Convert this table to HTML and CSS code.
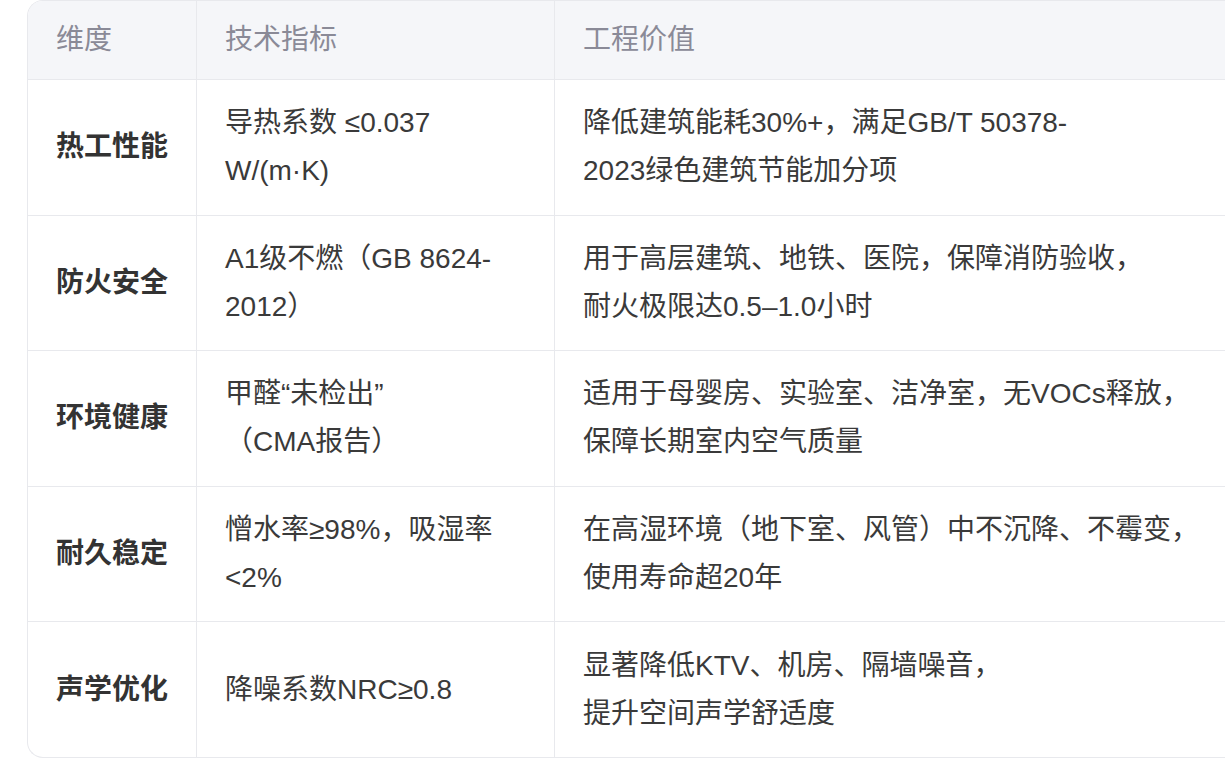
FILE: index.html
```html
<!DOCTYPE html>
<html lang="zh-CN">
<head>
<meta charset="utf-8">
<title>性能指标</title>
<link rel="stylesheet" href="styles.css">
</head>
<body>
<div class="table-wrap">
  <table class="spec-table">
    <colgroup>
      <col class="col-dim">
      <col class="col-metric">
      <col class="col-value">
    </colgroup>
    <thead>
      <tr>
        <th>维度</th>
        <th>技术指标</th>
        <th>工程价值</th>
      </tr>
    </thead>
    <tbody>
      <tr>
        <td class="dim">热工性能</td>
        <td>导热系数 ≤0.037<br>W/(m·K)</td>
        <td>降低建筑能耗30%+，满足GB/T 50378-<br>2023绿色建筑节能加分项</td>
      </tr>
      <tr>
        <td class="dim">防火安全</td>
        <td>A1级不燃（GB 8624-<br>2012）</td>
        <td>用于高层建筑、地铁、医院，保障消防验收，<br>耐火极限达0.5–1.0小时</td>
      </tr>
      <tr>
        <td class="dim">环境健康</td>
        <td>甲醛“未检出”<br>（CMA报告）</td>
        <td>适用于母婴房、实验室、洁净室，无VOCs释放，<br>保障长期室内空气质量</td>
      </tr>
      <tr>
        <td class="dim">耐久稳定</td>
        <td>憎水率≥98%，吸湿率<br>&lt;2%</td>
        <td>在高湿环境（地下室、风管）中不沉降、不霉变，<br>使用寿命超20年</td>
      </tr>
      <tr>
        <td class="dim">声学优化</td>
        <td>降噪系数NRC≥0.8</td>
        <td>显著降低KTV、机房、隔墙噪音，<br>提升空间声学舒适度</td>
      </tr>
    </tbody>
  </table>
</div>
</body>
</html>
```

FILE: styles.css
```css
html, body {
  margin: 0;
  padding: 0;
  background: #ffffff;
  overflow: hidden;
}

body {
  font-family: "Liberation Sans", "Noto Sans CJK SC", sans-serif;
  font-size: 28px;
  color: #333333;
}

.table-wrap {
  margin-left: 27px;
  border: 1px solid #e8e9ed;
  border-right: none;
  border-radius: 16px 0 0 16px;
  overflow: hidden;
}

.spec-table {
  width: 100%;
  border-collapse: separate;
  border-spacing: 0;
  table-layout: fixed;
}

.col-dim { width: 169px; }
.col-metric { width: 358px; }

.spec-table th,
.spec-table td {
  text-align: left;
  vertical-align: middle;
  line-height: 48px;
  padding: 19.3px 28px;
  border-right: 1px solid #e8e9ed;
  border-bottom: 1px solid #e8e9ed;
  white-space: nowrap;
}

.spec-table th:last-child,
.spec-table td:last-child {
  border-right: none;
}

.spec-table tbody tr:last-child td {
  border-bottom: none;
}

.spec-table th {
  background: #f5f6f9;
  color: #8a8a97;
  font-weight: 400;
  padding-top: 15px;
  padding-bottom: 15px;
}

.spec-table td {
  color: #3a3a3a;
}

.spec-table td.dim {
  font-weight: 700;
  color: #333333;
}
```
